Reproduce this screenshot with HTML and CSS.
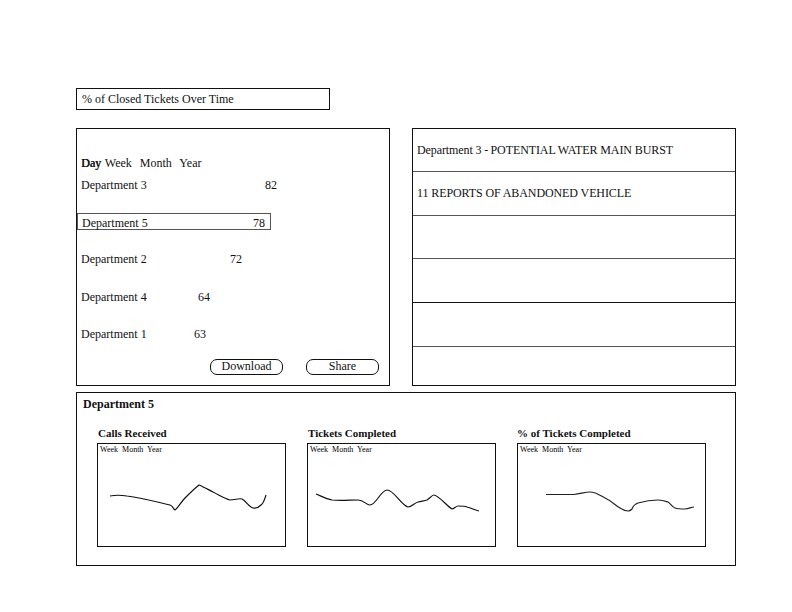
FILE: index.html
```html
<!DOCTYPE html>
<html>
<head>
<meta charset="utf-8">
<link rel="stylesheet" href="styles.css">
</head>
<body>
<div class="page">
  <div class="title-box">% of Closed Tickets Over Time</div>

  <div class="panels">
    <div class="rank-panel">
      <div class="periods"><span class="period-active">Day</span> Week&nbsp; Month&nbsp; Year</div>
      <div class="rank-row r1"><span class="rank-label" style="width:184px">Department 3</span><span>82</span></div>
      <div class="rank-row rank-selected"><span class="rank-label" style="width:171px">Department 5</span><span>78</span></div>
      <div class="rank-row r3"><span class="rank-label" style="width:149px">Department 2</span><span>72</span></div>
      <div class="rank-row r4"><span class="rank-label" style="width:117px">Department 4</span><span>64</span></div>
      <div class="rank-row r5"><span class="rank-label" style="width:113px">Department 1</span><span>63</span></div>
      <div class="actions">
        <button class="btn">Download</button>
        <button class="btn">Share</button>
      </div>
    </div>

    <div class="alerts-panel">
      <div class="alert-row h43">Department 3 -&#8201;POTENTIAL WATER MAIN BURST</div>
      <div class="alert-row h44">11 REPORTS OF ABANDONED VEHICLE</div>
      <div class="alert-row h43"></div>
      <div class="alert-row h44 dark"></div>
      <div class="alert-row h44"></div>
      <div class="alert-row last"></div>
    </div>
  </div>

  <div class="detail-panel">
    <div class="detail-title">Department 5</div>
    <div class="charts">
      <div class="chart">
        <div class="chart-title">Calls Received</div>
        <div class="chart-box">
          <div class="chart-periods">Week&nbsp; Month&nbsp; Year</div>
          <svg class="chart-svg" width="189" height="104" viewBox="0 0 189 104">
            <path d="M13,53 C18,52 24,52 30,53 C45,55 60,59 73,62 C76,63 77,67 78,67 C81,65 84,59 88,55 C93,50 98,45 102,42 C107,44 112,47 116,49 C122,52 128,56 133,57 C138,57 142,55 145,56 C149,58 152,64 156,65 C160,66 163,63 164,62 C167,60 168,55 169,52" fill="none" stroke="#111" stroke-width="1.2"/>
          </svg>
        </div>
      </div>
      <div class="chart">
        <div class="chart-title">Tickets Completed</div>
        <div class="chart-box">
          <div class="chart-periods">Week&nbsp; Month&nbsp; Year</div>
          <svg class="chart-svg" width="189" height="104" viewBox="0 0 189 104">
            <path d="M9,51 C14,53 19,56 25,57 C33,58 43,57 51,57 C57,57 59,62 63,62 C69,62 74,47 80,47 C87,47 94,62 101,64 C105,64 107,60 111,59 C115,58 118,58 120,57 C123,55 125,52 127,52 C131,52 140,63 145,66 C147,66 149,63 151,63 C154,63 158,63 160,64 C164,65 168,67 172,68" fill="none" stroke="#111" stroke-width="1.2"/>
          </svg>
        </div>
      </div>
      <div class="chart">
        <div class="chart-title shifted">% of Tickets Completed</div>
        <div class="chart-box">
          <div class="chart-periods">Week&nbsp; Month&nbsp; Year</div>
          <svg class="chart-svg" width="189" height="104" viewBox="0 0 189 104">
            <path d="M29,51.5 L57,51.5 C63,51 68,49 73,49 C79,49 84,53 88,55 C95,58 99,63 103,65 C106,67 109,68 111,68 C113,68 114,67 115,66 C116,63 118,61 121,60 C128,58 134,57 141,57 C146,57 148,58 151,59 C154,61 155,64 158,65 C161,66 165,66 168,66 C172,66 174,64 177,64" fill="none" stroke="#222" stroke-width="1.2"/>
          </svg>
        </div>
      </div>
    </div>
  </div>
</div>
</body>
</html>
```

FILE: styles.css
```css
* { box-sizing: border-box; }

body {
  margin: 0;
  background: #ffffff;
  font-family: "Liberation Serif", "Times New Roman", serif;
  font-size: 12px;
  color: #111;
}

.page {
  padding: 88px 0 0 76px;
  width: 792px;
}

.title-box {
  width: 254px;
  height: 22px;
  border: 1px solid #111;
  padding-left: 5px;
  line-height: 20px;
}

.panels {
  display: flex;
  gap: 22px;
  margin-top: 18px;
}

.rank-panel {
  width: 314px;
  height: 258px;
  border: 1px solid #111;
  padding: 26px 0 0 4px;
}

.periods {
  line-height: 16px;
  word-spacing: 1px;
}

.period-active {
  text-shadow: 0.5px 0 0 #111;
}

.rank-row {
  display: flex;
  line-height: 16px;
}

.rank-label {
  display: inline-block;
  flex: none;
}

.r1 { margin-top: 6px; }

.rank-selected {
  margin-top: 20px;
  margin-left: -4px;
  width: 194px;
  height: 17px;
  border: 1px solid #555;
  padding: 2px 0 0 4px;
  line-height: 15px;
}

.r3 { margin-top: 21px; }
.r4 { margin-top: 22px; }
.r5 { margin-top: 21px; }

.actions {
  display: flex;
  gap: 23px;
  margin-top: 17px;
  margin-left: 129px;
}

.btn {
  width: 73px;
  height: 16px;
  border: 1px solid #111;
  border-radius: 7px;
  background: #fff;
  font-family: "Liberation Serif", "Times New Roman", serif;
  font-size: 12px;
  line-height: 12px;
  color: #111;
  padding: 0 0 2px 0;
}

.alerts-panel {
  width: 324px;
  height: 258px;
  border: 1px solid #111;
  display: flex;
  flex-direction: column;
}

.alert-row {
  flex: none;
  border-bottom: 1px solid #555;
  padding-left: 4px;
  display: flex;
  align-items: center;
  letter-spacing: -0.1px;
}

.alert-row.h43 { height: 43px; }
.alert-row.h44 { height: 44px; }

.alert-row.dark { border-bottom-color: #111; }

.alert-row.last {
  flex: 1;
  border-bottom: none;
}

.detail-panel {
  width: 660px;
  height: 174px;
  border: 1px solid #111;
  margin-top: 6px;
  padding: 4px 0 0 6px;
}

.detail-title {
  font-weight: bold;
  line-height: 14px;
}

.charts {
  display: flex;
  gap: 21px;
  margin-top: 15px;
  margin-left: 14px;
}

.chart {
  width: 189px;
}

.chart-title {
  font-weight: bold;
  font-size: 11px;
  line-height: 14px;
  padding-left: 1px;
}

.chart-title.shifted { padding-left: 0; }

.chart-box {
  margin-top: 3px;
  width: 189px;
  height: 104px;
  border: 1px solid #111;
  position: relative;
}

.chart-periods {
  font-size: 8px;
  line-height: 10px;
  padding: 1px 0 0 2px;
  color: #000;
}

.chart-svg {
  position: absolute;
  left: -1px;
  top: -1px;
}
```
